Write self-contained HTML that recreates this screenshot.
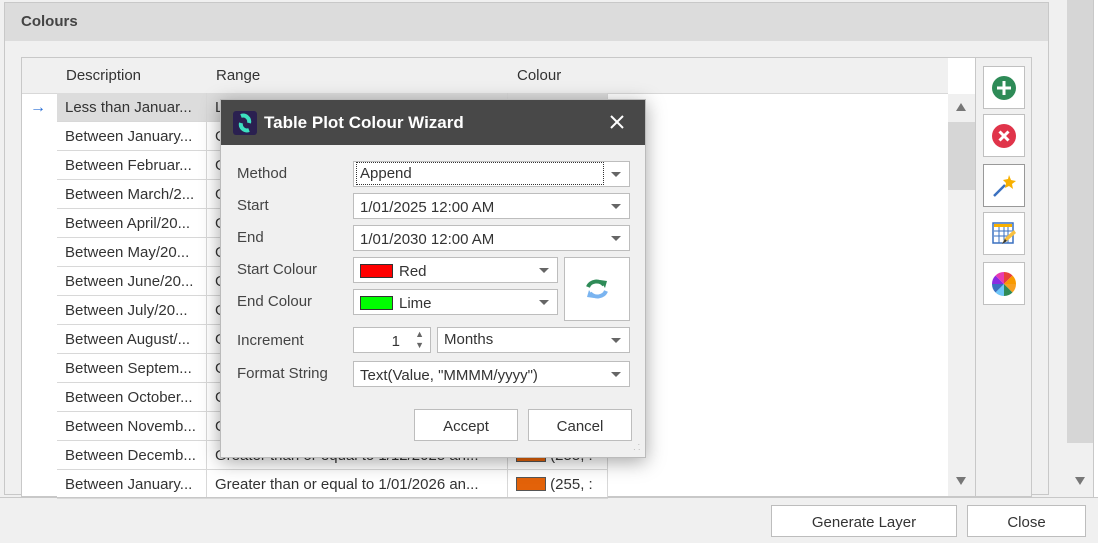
<!DOCTYPE html>
<html><head><meta charset="utf-8"><style>
*{box-sizing:border-box;margin:0;padding:0}
body{width:1098px;height:543px;background:#f0f0f0;font-family:"Liberation Sans",sans-serif;font-size:15px;color:#333;position:relative;overflow:hidden}
.abs{position:absolute}
.hdr{left:4px;top:2px;width:1045px;height:493px;border:1px solid #c8c8c8;background:#f0f0f0}
.band{left:5px;top:3px;width:1043px;height:38px;background:#dcdcdc}
.grid{left:21px;top:57px;width:955px;height:440px;border:1px solid #c8c8c8;background:#fff}
.th{top:58px;height:36px;background:#f0f0f0;border-right:1px solid #d8d8d8;border-bottom:1px solid #d8d8d8;line-height:36px;padding-left:9px}
.row{left:57px;width:551px;height:29px;border-bottom:1px solid #d8d8d8;line-height:30px}
.row span{position:absolute;top:0;overflow:hidden;white-space:nowrap;padding-left:8px}
.btn{left:983px;width:42px;height:43px;border:1px solid #c0c0c0;background:#fff;display:flex;align-items:center;justify-content:center}
.dlg{left:220px;top:99px;width:426px;height:359px;background:#f0f0f0;border:1px solid #bbb;box-shadow:0 4px 18px rgba(0,0,0,.35)}
.title{left:0;top:0;width:424px;height:45px;background:#484848;color:#fff;font-weight:bold;font-size:17px;line-height:45px;padding-left:43px}
.lbl{left:16px;color:#444}
.box{background:#fff;border:1px solid #bdbdbd;height:26px;line-height:27px;padding-left:6px}
.arr{position:absolute;right:8px;top:10px;width:0;height:0;border-left:5px solid transparent;border-right:5px solid transparent;border-top:5px solid #666}
.pb{background:#fff;border:1px solid #bdbdbd;text-align:center}
</style></head><body>
<div class="abs hdr"></div>
<div class="abs band"></div>
<div class="abs" style="left:21px;top:13px;font-weight:bold;color:#444">Colours</div>
<div class="abs" style="left:1067px;top:0;width:26px;height:443px;background:#d6d6d6"></div>
<div class="abs" style="left:1093px;top:0;width:5px;height:497px;background:#fff;border-left:1px solid #c8c8c8"></div>
<div class="abs" style="left:1075px;top:477px;border-left:5px solid transparent;border-right:5px solid transparent;border-top:8px solid #777"></div>
<div class="abs grid"></div>
<div class="abs th" style="left:22px;width:36px;padding:0"></div>
<div class="abs th" style="left:57px;width:151px">Description</div>
<div class="abs th" style="left:207px;width:302px">Range</div>
<div class="abs th" style="left:508px;width:101px">Colour</div>
<div class="abs th" style="left:608px;width:340px;border-right:none"></div>
<div class="abs" style="left:948px;top:94px;width:27px;height:402px;background:#f0f0f0"></div>
<div class="abs" style="left:948px;top:122px;width:27px;height:68px;background:#d6d6d6"></div>
<div class="abs" style="left:956px;top:103px;border-left:5px solid transparent;border-right:5px solid transparent;border-bottom:8px solid #777"></div>
<div class="abs" style="left:956px;top:477px;border-left:5px solid transparent;border-right:5px solid transparent;border-top:8px solid #777"></div>
<div class="abs" style="left:30px;top:99px;color:#2a6fd6;font-size:16px">→</div>
<div id="rows"></div>
<script>
var d=["Less than Januar...","Between January...","Between Februar...","Between March/2...","Between April/20...","Between May/20...","Between June/20...","Between July/20...","Between August/...","Between Septem...","Between October...","Between Novemb...","Between Decemb...","Between January..."];
var h="";for(var i=0;i<d.length;i++){var t=93+i*29;var bg=i==0?"#dcdcdc":"#fff";
var r=i==0?"L":"G";if(i>=12)r=i==12?"Greater than or equal to 1/12/2025 an...":"Greater than or equal to 1/01/2026 an...";
h+='<div class="abs row" style="top:'+t+'px;background:'+bg+'"><span style="left:0;width:150px;border-right:1px solid #d8d8d8;height:29px">'+d[i]+'</span><span style="left:150px;width:301px;border-right:1px solid #d8d8d8;height:29px">'+r+'</span><span style="left:451px;width:100px;border-right:1px solid #d8d8d8;height:29px"><i style="display:inline-block;width:30px;height:14px;background:#e36209;border:1px solid #555;vertical-align:-2px"></i> (255, :</span></div>';}
document.getElementById("rows").innerHTML=h;
</script>
<div class="abs" style="left:975px;top:57px;width:57px;height:440px;border:1px solid #c8c8c8;background:#f0f0f0"></div>
<div class="abs btn" style="top:66px"><svg width="24" height="24"><circle cx="12" cy="12" r="12" fill="#2e8b57"/><path d="M12 5v14M5 12h14" stroke="#fff" stroke-width="3"/></svg></div>
<div class="abs btn" style="top:114px"><svg width="24" height="24"><circle cx="12" cy="12" r="12" fill="#e0344a"/><path d="M7.5 7.5l9 9M16.5 7.5l-9 9" stroke="#fff" stroke-width="3"/></svg></div>
<div class="abs btn" style="top:164px;border-color:#999"><svg width="24" height="24"><path d="M2 22L13 11" stroke="#3a70c0" stroke-width="2.5"/><path d="M17 1l2 5 5 1-4 3 1 5-4-3-4 2 1-5-3-3 5-1z" fill="#f8b000"/></svg></div>
<div class="abs btn" style="top:212px"><svg width="24" height="24"><rect x="1" y="1" width="20" height="20" fill="#fff" stroke="#3a70c0" stroke-width="1.5"/><rect x="2" y="2" width="18" height="3" fill="#f8b000"/><path d="M2 9h18M2 14h18M7 5v16M12 5v16M16 5v16" stroke="#3a70c0"/><path d="M10 22l3-6 9-8 2 3-9 8z" fill="#f8c040"/><path d="M10 22l3-5 2 2z" fill="#333"/></svg></div>
<div class="abs btn" style="top:262px"><svg width="24" height="24"><path d="M12 12L12 0A12 12 0 0 1 20.5 3.5z" fill="#e8403a"/><path d="M12 12L20.5 3.5A12 12 0 0 1 24 12z" fill="#f89a00"/><path d="M12 12L24 12A12 12 0 0 1 20.5 20.5z" fill="#f8a020"/><path d="M12 12L20.5 20.5A12 12 0 0 1 12 24z" fill="#2e8b57"/><path d="M12 12L12 24A12 12 0 0 1 3.5 20.5z" fill="#6ec6f8"/><path d="M12 12L3.5 20.5A12 12 0 0 1 0 12z" fill="#3a70c0"/><path d="M12 12L0 12A12 12 0 0 1 3.5 3.5z" fill="#8a2be2"/><path d="M12 12L3.5 3.5A12 12 0 0 1 12 0z" fill="#e83ab0"/></svg></div>
<div class="abs" style="left:0;top:497px;width:1098px;height:1px;background:#c8c8c8"></div>
<div class="abs pb" style="left:771px;top:505px;width:186px;height:32px;line-height:33px">Generate Layer</div>
<div class="abs pb" style="left:967px;top:505px;width:119px;height:32px;line-height:33px">Close</div>

<div class="abs dlg">
<div class="abs title">Table Plot Colour Wizard</div>
<svg class="abs" style="left:12px;top:11px" width="24" height="24"><rect width="24" height="24" rx="3" fill="#2a2050"/><path d="M8 5a6 6 0 0 1 8 7" stroke="#3de0c0" stroke-width="4" fill="none"/><path d="M16 19a6 6 0 0 1-8-7" stroke="#3de0c0" stroke-width="4" fill="none"/></svg>
<svg class="abs" style="left:389px;top:15px" width="14" height="14"><path d="M1 1l12 12M13 1L1 13" stroke="#fff" stroke-width="2"/></svg>
<div class="abs lbl" style="top:65px">Method</div>
<div class="abs lbl" style="top:97px">Start</div>
<div class="abs lbl" style="top:129px">End</div>
<div class="abs lbl" style="top:161px">Start Colour</div>
<div class="abs lbl" style="top:193px">End Colour</div>
<div class="abs lbl" style="top:232px">Increment</div>
<div class="abs lbl" style="top:265px">Format String</div>
<div class="abs box" style="left:132px;top:61px;width:277px;line-height:22px;padding-top:1px"><span style="outline:1px dotted #333;display:inline-block;width:246px;line-height:20px;margin-left:-3px;padding-left:3px;padding-top:1px">Append</span><i class="arr"></i></div>
<div class="abs box" style="left:132px;top:93px;width:277px">1/01/2025 12:00 AM<i class="arr"></i></div>
<div class="abs box" style="left:132px;top:125px;width:277px">1/01/2030 12:00 AM<i class="arr"></i></div>
<div class="abs box" style="left:132px;top:157px;width:205px"><i style="display:inline-block;width:33px;height:14px;background:#f00;border:1px solid #333;vertical-align:-2px;margin-right:6px"></i>Red<i class="arr"></i></div>
<div class="abs box" style="left:132px;top:189px;width:205px"><i style="display:inline-block;width:33px;height:14px;background:#0f0;border:1px solid #333;vertical-align:-2px;margin-right:6px"></i>Lime<i class="arr"></i></div>
<div class="abs box" style="left:343px;top:157px;width:66px;height:64px;padding:0"><svg style="position:absolute;left:20px;top:20px" width="24" height="22"><path d="M3 9a9 8 0 0 1 16-2" stroke="#2e8b57" stroke-width="4" fill="none"/><path d="M15 2l7 1-2 7z" fill="#2e8b57"/><path d="M21 13a9 8 0 0 1-16 2" stroke="#7ab4f0" stroke-width="4" fill="none"/><path d="M9 20l-7-1 2-7z" fill="#7ab4f0"/></svg></div>
<div class="abs box" style="left:132px;top:227px;width:78px;text-align:right;padding-right:30px">1<span style="position:absolute;right:6px;top:1px;font-size:9px;color:#666;line-height:11px">▲<br>▼</span></div>
<div class="abs box" style="left:216px;top:227px;width:193px;line-height:24px">Months<i class="arr"></i></div>
<div class="abs box" style="left:132px;top:261px;width:277px">Text(Value, "MMMM/yyyy")<i class="arr"></i></div>
<div class="abs pb" style="left:193px;top:309px;width:104px;height:32px;line-height:33px">Accept</div>
<div class="abs pb" style="left:307px;top:309px;width:104px;height:32px;line-height:33px">Cancel</div>
<div class="abs" style="left:412px;top:342px;color:#aaa;font-size:8px;line-height:5px">&nbsp;&nbsp;·<br>·&nbsp;·</div>
</div>
</body></html>
